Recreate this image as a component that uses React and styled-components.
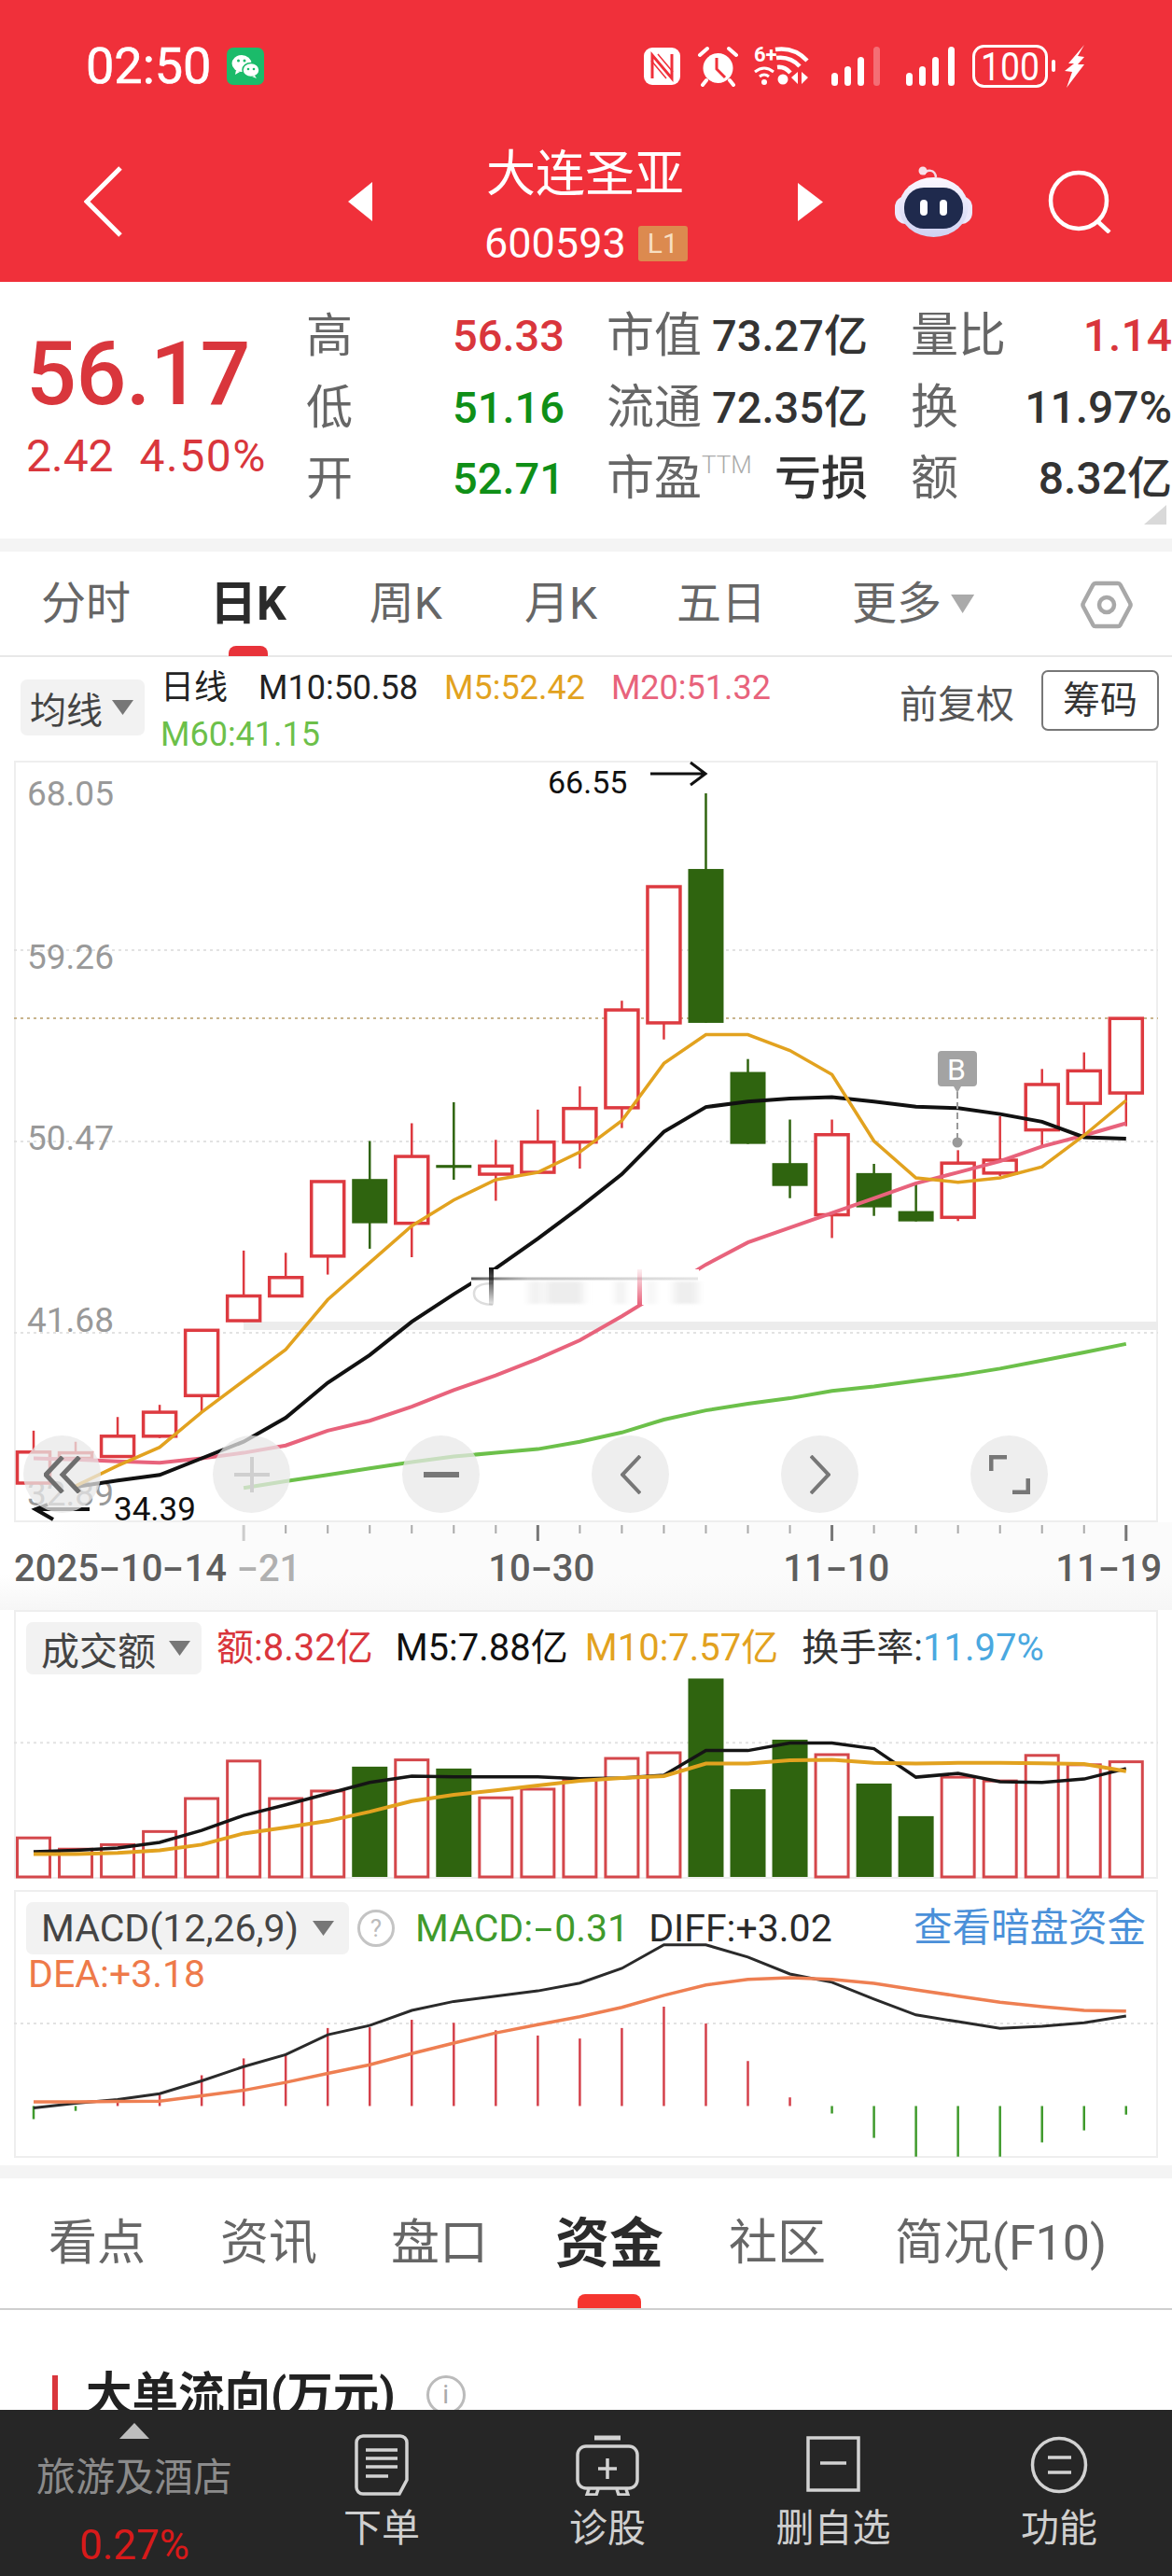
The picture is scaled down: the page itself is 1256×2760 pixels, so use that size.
import React from 'react';
import styled, { createGlobalStyle } from 'styled-components';

const FONT = `Roboto, "Noto Sans CJK SC", "Noto Sans", sans-serif`;
const RED = '#d9363c';
const GREEN = '#0f8f17';
const CANDLE_RED = '#dd3a40';
const CANDLE_GREEN = '#2f640f';
const ORANGE = '#e2a21f';
const PINK = '#e8637c';
const LIME = '#6cc04a';

const Global = createGlobalStyle`
  html, body { margin: 0; padding: 0; background: #fff; }
  body { font-family: ${FONT}; width: 1256px; height: 2760px; overflow: hidden; }
  * { box-sizing: border-box; }
`;

const Page = styled.div`
  width: 1256px; height: 2760px; overflow: hidden; display: flex; flex-direction: column; background: #fff; color: #333;
`;
const Header = styled.header`background: #f0303a; height: 302px; color: #fff; display: flex; flex-direction: column;`;
const StatusBar = styled.div`height: 130px; padding: 48px 94px 0 92px; display: flex; align-items: flex-start;`;
const Clock = styled.span`font-size: 54px; line-height: 46px; font-weight: 400; width: 134px; margin-right: 17px; white-space: nowrap; -webkit-text-stroke: 0.6px #fff;`;
const StatusIcon = styled.svg`display: block; flex: none; overflow: visible; margin-left: ${p => p.$gap || 0}px; margin-top: ${p => p.$top || 0}px;`;
const StatusRight = styled.div`margin-left: auto; display: flex; align-items: flex-start;`;
const Nav = styled.nav`height: 172px; padding-left: 90px; display: flex; align-items: center;`;
const NavIcon = styled.svg`display: block; flex: none; margin-left: ${p => p.$gap || 0}px;`;
const TitleBlock = styled.div`
  align-self: flex-start; margin: 27px 0 0 120px; width: 218px; flex: none; display: flex; flex-direction: column;
`;
const Title = styled.div`font-size: 53px; line-height: 60px; text-align: left; padding-left: 2px; white-space: nowrap;`;
const CodeRow = styled.div`margin-top: 24px; display: flex; align-items: center; gap: 13px; height: 40px;`;
const Code = styled.span`font-size: 45px; line-height: 40px;`;
const LevelTag = styled.span`
  width: 56px; height: 38px; background: #dc8a4f; color: #f7dfc2; border-radius: 3px; font-size: 30px; line-height: 38px; text-align: center;
`;

const Quote = styled.section`height: 275px; display: flex; position: relative; flex: none;`;
const PriceCol = styled.div`width: 328px; flex: none; padding: 49px 0 0 28px;`;
const Price = styled.div`font-size: 95px; line-height: 100px; font-weight: 500; color: ${RED}; letter-spacing: -0.5px;`;
const Change = styled.div`margin-top: 13px; display: flex; gap: 28px; font-size: 48px; line-height: 50px; color: ${RED};`;
const ChangeRate = styled.span`letter-spacing: 1.5px;`;
const StatCol = styled.div`
  width: ${p => p.$w}px; margin-left: ${p => p.$ml}px; flex: none; padding-top: 20px; display: flex; flex-direction: column;
`;
const StatRow = styled.div`height: 76.5px; display: flex; justify-content: space-between; align-items: center; white-space: nowrap;`;
const StatLabel = styled.span`font-size: ${p => p.$size || 51}px; line-height: 60px; color: #666; display: inline-flex; align-items: flex-start;`;
const Ttm = styled.sup`font-size: 26px; line-height: 30px; color: #aaa; font-weight: 300; vertical-align: baseline;`;
const StatValue = styled.span`
  font-size: ${p => p.$size || 47}px; line-height: 60px; font-weight: 500; color: ${p => p.$color || '#333'};
`;
const Corner = styled.div`
  position: absolute; right: 6px; bottom: 15px; width: 24px; height: 21px; background: #d9d9d9; clip-path: polygon(100% 0, 100% 100%, 0 100%);
`;
const Band = styled.div`height: 14px; flex: none; background: #f4f4f4;`;

const TabRow = styled.div`
  height: ${p => p.$h}px; flex: none; display: flex; align-items: flex-start; padding-top: ${p => p.$pt}px; border-bottom: 2px solid ${p => p.$line}; position: relative;
`;
const Tab = styled.div`
  position: relative; height: 60px; flex: none; margin-left: ${p => p.$ml}px; white-space: nowrap; font-size: ${p => p.$active ? p.$size + (p.$grow || 0) : p.$size}px; line-height: 60px; color: ${p => p.$active ? '#2b2b2b' : '#666'}; font-weight: ${p => p.$active ? 700 : 400};
`;
const TabMark = styled.i`
  position: absolute; left: 50%; transform: translateX(-50%); bottom: ${p => p.$bottom}px; width: ${p => p.$w}px; height: ${p => p.$h}px; border-radius: 8px 8px 0 0; background: ${p => p.$color};
`;
const TabArrow = styled.i`
  flex: none; margin: 20px 0 0 10px; width: 25px; height: 20px; background: #aaa; clip-path: polygon(0 0, 100% 0, 50% 100%);
`;
const GearSlot = styled.div`margin: 5px 0 0 auto; padding-right: 42px;`;
const GearIcon = styled.svg`display: block;`;

const IndicatorRow = styled.div`height: 111px; flex: none; padding: 0 14px 0 22px; display: flex; align-items: flex-start;`;
const ChipSlot = styled.div`margin-top: 24px; flex: none;`;
const Chip = styled.div`
  width: ${p => p.$w}px; height: ${p => p.$h}px; flex: none; background: #f2f2f2; border-radius: 7px; display: flex; align-items: center; justify-content: space-between; padding: 0 ${p => p.$pr || 12}px 0 ${p => p.$pl}px; font-size: ${p => p.$size}px; color: #444; white-space: nowrap;
`;
const ChipArrow = styled.i`
  width: 23px; height: 16px; flex: none; background: #777; clip-path: polygon(0 0, 100% 0, 50% 100%);
`;
const Legend = styled.div`margin: 8px 0 0 17px; display: flex; flex-wrap: wrap; column-gap: 28px; width: 700px;`;
const LegendLine = styled.span`font-size: 36px; line-height: 50px; margin-right: ${p => p.$mr || 0}px; color: ${p => p.$color || '#222'}; white-space: nowrap;`;
const RightTools = styled.div`margin-left: auto; display: flex; align-items: flex-start;`;
const Adjust = styled.span`margin-top: 26px; font-size: 41px; line-height: 50px; color: #555; white-space: nowrap;`;
const ChipButton = styled.button`
  margin: 14px 0 0 29px; width: 126px; height: 65px; border: 2px solid #777; border-radius: 7px; background: #fff; font: 400 40px/60px ${FONT}; color: #333; padding: 0;
`;

const Panel = styled.div`
  margin: 0 15px; width: 1226px; flex: none; height: ${p => p.$h}px; border: 2px solid #eee; position: relative;
`;
const ChartSvg = styled.svg`position: absolute; left: -2px; top: -2px; display: block;`;
const AxisText = styled.text`font-family: ${FONT}; font-size: 37px; fill: #999;`;
const MarkText = styled.text`font-family: ${FONT}; font-size: ${p => p.$size || 34}px; fill: #111;`;
const BText = styled.text`font-family: ${FONT}; font-size: 32px; fill: #fff;`;

const ControlRow = styled.div`position: absolute; left: 8px; top: 721px; display: flex; gap: 120px;`;
const RoundButton = styled.div`
  width: 83px; height: 83px; border-radius: 50%; background: rgba(232,232,232,.74); display: flex; align-items: center; justify-content: center;
`;

const AxisSection = styled.div`
  height: 94px; flex: none; background: linear-gradient(#ffffff00 60%, #f6f6f6 100%), linear-gradient(90deg, #fff 40px, #fbfbfb 110px);
`;
const DateRow = styled.div`margin-top: 6px; padding-left: 15px; display: flex; font-size: 40px; line-height: 40px; font-weight: 500; white-space: nowrap;`;
const DateText = styled.span`margin-left: ${p => p.$ml || 0}px; color: ${p => p.$faint ? '#b0b0b0' : '#5e5e5e'};`;
const Dash = styled.span`display: inline-block; width: 23px; text-align: center; transform: scaleX(1.7);`;
const Ticks = styled.svg`display: block;`;

const PanelLegend = styled.div`position: absolute; left: 11px; top: 11px; right: 11px;`;
const LegendRow = styled.div`display: flex; align-items: center; white-space: nowrap; height: 56px;`;
const Metric = styled.span`
  margin-left: ${p => p.$ml}px; font-size: ${p => p.$size || 40}px; line-height: 56px; color: ${p => p.$color};
`;
const MetricBlue = styled.span`color: #4aa8e0;`;
const Tail = styled.span`margin-left: auto; font-size: 41.5px; line-height: 56px; color: #4a90d9;`;
const Help = styled.span`
  margin-left: 9px; width: 40px; height: 40px; border-radius: 50%; border: 3px solid #c4c4c4; color: #bbb; font-size: 26px; line-height: 34px; text-align: center;
`;
const DeaLine = styled.div`margin: -6px 0 0 2px; font-size: 41px; line-height: 54px; color: #ee7a4a;`;
const Gap = styled.div`height: ${p => p.$h}px; flex: none;`;

const Heading = styled.section`height: 107px; flex: none; overflow: hidden; padding: 70px 0 0 56px; display: flex; align-items: flex-start;`;
const HeadingBar = styled.i`width: 6px; height: 38px; background: #d9363c; flex: none;`;
const HeadingText = styled.h2`margin: -9px 0 0 30px; font-size: 49.5px; line-height: 60px; font-weight: 700; color: #222; white-space: nowrap;`;
const InfoDot = styled.span`
  margin: 0 0 0 33px; width: 42px; height: 42px; border-radius: 50%; border: 3px solid #bbb; color: #aaa; font-size: 28px; line-height: 36px; text-align: center; flex: none;
`;

const BottomBar = styled.footer`
  height: 179px; flex: none; background: #262626; display: grid; grid-template-columns: 288px repeat(4, 242px); align-items: start;
`;
const SectorCell = styled.div`display: flex; flex-direction: column; align-items: center; padding-top: 14px;`;
const UpMark = styled.i`width: 32px; height: 17px; background: #bdbdbd; clip-path: polygon(50% 0, 100% 100%, 0 100%);`;
const SectorName = styled.span`margin-top: 17px; font-size: 42px; line-height: 50px; color: #8b8b8b; white-space: nowrap;`;
const SectorRate = styled.span`margin-top: 22px; font-size: 44px; line-height: 50px; color: #d81a1a;`;
const ActionCell = styled.div`display: flex; flex-direction: column; align-items: center; padding-top: 26px;`;
const ActionIcon = styled.svg`display: block;`;
const ActionLabel = styled.span`margin-top: 10px; font-size: 41px; line-height: 50px; color: #cfcfcf; white-space: nowrap;`;

/* ---- chart data, read off the reference ---- */
const y3 = v => 1090 + v / 2.529;
const y4 = v => 1700 + v / 2.489;
const X = i => 36 + 45.03 * i;
const line = (arr, f, start = 0) => arr.map((v, i) => `${X(i + start).toFixed(1)},${f(v).toFixed(1)}`).join(' ');

const CANDLES = [
  ['r', 1120, 1262, 1178, 1262], ['r', 1150, 1195, 1180, 1195], ['r', 1083, 1190, 1135, 1190], ['r', 1050, 1140, 1070, 1135],
  ['r', 848, 1070, 848, 1025], ['r', 632, 825, 755, 822], ['r', 638, 757, 705, 755], ['r', 445, 697, 445, 647],
  ['g', 335, 627, 438, 558], ['r', 287, 650, 377, 558], ['g', 230, 440, 400, 408], ['r', 332, 497, 403, 425],
  ['r', 250, 420, 338, 420], ['r', 187, 410, 247, 338], ['r', -45, 300, -20, 245], ['r', -354, 60, -354, 15],
  ['g', -607, 15, -402, 15], ['g', 113, 343, 148, 343], ['g', 277, 490, 395, 457], ['r', 277, 598, 318, 535],
  ['g', 397, 538, 422, 515], ['g', 450, 553, 525, 553], ['r', 360, 552, 395, 542], ['r', 268, 430, 387, 422],
  ['r', 140, 350, 182, 305], ['r', 95, 320, 145, 233], ['r', 3, 295, 3, 205],
];
const M5 = [1270, 1215, 1165, 1070, 985, 900, 765, 665, 565, 495, 440, 420, 365, 280, 125, 47, 47, 90, 155, 335, 435, 447, 435, 405, 320, 225];
const M10 = [1272, 1255, 1240, 1195, 1150, 1085, 990, 915, 825, 750, 680, 600, 515, 425, 310, 243, 228, 220, 216, 228, 242, 246, 262, 283, 325, 329];
const M20 = [1195, 1198, 1203, 1207, 1195, 1180, 1160, 1120, 1093, 1055, 1010, 970, 925, 875, 810, 740, 670, 610, 570, 530, 490, 450, 420, 390, 350, 320, 287];
const M60 = [1275, 1257, 1240, 1222, 1205, 1190, 1180, 1170, 1150, 1125, 1090, 1065, 1047, 1032, 1012, 1000, 985, 970, 952, 930, 908, 885];

const BARS = [[670, 'r'], [700, 'r'], [688, 'r'], [653, 'r'], [565, 'r'], [465, 'r'], [565, 'r'], [545, 'r'], [480, 'g'], [462, 'r'], [485, 'g'], [563, 'r'], [540, 'r'], [515, 'r'], [458, 'r'], [443, 'r'], [245, 'g'], [540, 'g'], [408, 'g'], [448, 'r'], [525, 'g'], [612, 'g'], [508, 'r'], [518, 'r'], [450, 'r'], [475, 'r'], [467, 'r']];
const VOL_M5 = [707, 703, 697, 682, 650, 610, 582, 552, 522, 505, 507, 507, 507, 512, 510, 503, 437, 437, 417, 417, 432, 508, 498, 520, 522, 513, 485];
const VOL_M10 = [713, 713, 710, 703, 688, 658, 642, 625, 600, 572, 555, 543, 530, 518, 510, 505, 472, 472, 463, 462, 470, 472, 470, 470, 471, 473, 492];
const HIST = [1420, 1398, 1370, 1355, 1303, 1258, 1245, 1177, 1175, 1155, 1163, 1183, 1197, 1205, 1177, 1120, 1165, 1265, 1362, 1405, 1470, 1520, 1520, 1520, 1482, 1450, 1408];
const DIFF = [1390, 1378, 1368, 1352, 1318, 1280, 1248, 1195, 1170, 1130, 1106, 1092, 1078, 1057, 1018, 955, 955, 988, 1033, 1055, 1100, 1142, 1160, 1178, 1172, 1163, 1145];
const DEA = [1374, 1374, 1373, 1372, 1358, 1343, 1322, 1298, 1275, 1245, 1217, 1190, 1168, 1147, 1122, 1090, 1062, 1047, 1043, 1047, 1058, 1075, 1092, 1108, 1120, 1130, 1132];

const dotted = (y, c = '#e2e2e2') => <line x1="15" x2="1241" y1={y} y2={y} stroke={c} strokeWidth="2" strokeDasharray="3 4" />;

/* the hyphen in these labels is drawn about twice as wide as the font's */
const Dashed = ({ text }) => text.split('-').map((part, i) => (
  <React.Fragment key={i}>{i > 0 && <Dash>-</Dash>}{part}</React.Fragment>
));

const MainChart = () => (
  <ChartSvg width="1226" height="816" viewBox="15 815 1226 816">
    <defs>
      <filter id="smear" x="-10%" y="-50%" width="120%" height="200%"><feGaussianBlur stdDeviation="4 1.5" /></filter>
      <linearGradient id="fadeDown" x1="0" y1="0" x2="0" y2="1"><stop offset="0" stopColor="#111" /><stop offset="1" stopColor="#111" stopOpacity=".1" /></linearGradient>
      <linearGradient id="fadeUp" x1="0" y1="1" x2="0" y2="0"><stop offset="0" stopColor={PINK} /><stop offset="1" stopColor={PINK} stopOpacity=".1" /></linearGradient>
      <linearGradient id="fadeRight" x1="0" y1="0" x2="1" y2="0"><stop offset="0" stopColor="#222" /><stop offset=".25" stopColor="#aaa" /><stop offset="1" stopColor="#ddd" /></linearGradient>
    </defs>
    {dotted(1018)}{dotted(1091, '#c9b48d')}{dotted(1223)}{dotted(1428)}
    <AxisText x="29" y="863">68.05</AxisText>
    <AxisText x="29" y="1038">59.26</AxisText>
    <AxisText x="29" y="1232">50.47</AxisText>
    <AxisText x="29" y="1427">41.68</AxisText>
    <AxisText x="29" y="1613">32.89</AxisText>
    <rect x="261" y="1416" width="980" height="9" fill="#ececec" />
    {CANDLES.map(([c, hi, lo, top, bot], i) => {
      const col = c === 'r' ? CANDLE_RED : CANDLE_GREEN;
      const x = X(i);
      return (
        <g key={i}>
          <line x1={x} x2={x} y1={y3(hi)} y2={y3(lo)} stroke={col} strokeWidth="2.5" />
          {c === 'g'
            ? <rect x={x - 19} y={y3(top)} width="38" height={Math.max(y3(bot) - y3(top), 3)} fill={col} />
            : <rect x={x - 17.5} y={y3(top)} width="35" height={y3(bot) - y3(top)} fill="#fff" stroke={col} strokeWidth="3.5" />}
        </g>
      );
    })}
    <polyline points={line(M60, y3, 5)} fill="none" stroke={LIME} strokeWidth="4" />
    <polyline points={line(M20, y3)} fill="none" stroke={PINK} strokeWidth="4" />
    <polyline points={line(M10, y3, 1)} fill="none" stroke="#111" strokeWidth="4" />
    <polyline points={line(M5, y3, 1)} fill="none" stroke={ORANGE} strokeWidth="3.5" />
    {/* smeared capture artefact over the middle of the chart */}
    <rect x="505" y="1360" width="244" height="38" fill="#fff" />
    <g filter="url(#smear)">
      <rect x="567" y="1373" width="13" height="24" fill="#f0f0f0" />
      <rect x="585" y="1373" width="40" height="24" fill="#ededed" />
      <rect x="660" y="1373" width="10" height="24" fill="#f0f0f0" />
      <rect x="695" y="1373" width="6" height="24" fill="#f0f0f0" />
      <rect x="722" y="1373" width="26" height="24" fill="#eee" />
    </g>
    <path d="M528 1375q-20 0-20 11t20 12" fill="none" stroke="#ddd" strokeWidth="2.500" />
    <rect x="505" y="1368.500" width="243" height="3" fill="url(#fadeRight)" opacity=".75" />
    <rect x="524" y="1358" width="5" height="40" fill="url(#fadeDown)" />
    <rect x="683" y="1360" width="5" height="38" fill="url(#fadeUp)" />
    {/* high / low marks */}
    <MarkText x="587" y="850">66.55</MarkText>
    <path d="M697 829h58M740 817l16 12-16 12" fill="none" stroke="#111" strokeWidth="3" />
    <MarkText x="122" y="1629" $size={35}>34.39</MarkText>
    <path d="M96 1617H38M57 1628l-19-11 13-5" fill="none" stroke="#111" strokeWidth="4" />
    {/* B marker */}
    <line x1="1026" x2="1026" y1="1170" y2="1224" stroke="#999" strokeWidth="2" strokeDasharray="7 4" />
    <circle cx="1026" cy="1224" r="5.500" fill="#999" />
    <path d="M1009 1126h34a4 4 0 0 1 4 4v30a4 4 0 0 1-4 4h-13l-4 7-4-7h-13a4 4 0 0 1-4-4v-30a4 4 0 0 1 4-4z" fill="#a3a3a3" />
    <BText x="1015" y="1157">B</BText>
  </ChartSvg>
);

const VolumeChart = () => (
  <ChartSvg width="1226" height="290" viewBox="15 1725 1226 290">
    {dotted(y4(416))}
    {BARS.map(([t, c], i) => (c === 'g'
      ? <rect key={i} x={X(i) - 19} y={y4(t)} width="38" height={2011 - y4(t)} fill={CANDLE_GREEN} />
      : <rect key={i} x={X(i) - 17.5} y={y4(t)} width="35" height={2011 - y4(t)} fill="#fff" stroke="#d4474b" strokeWidth="3" />))}
    <polyline points={line(VOL_M5, y4)} fill="none" stroke="#151515" strokeWidth="3.5" />
    <polyline points={line(VOL_M10, y4)} fill="none" stroke={ORANGE} strokeWidth="4" />
  </ChartSvg>
);

const MacdChart = () => (
  <ChartSvg width="1226" height="290" viewBox="15 2025 1226 290">
    {dotted(y4(1165))}
    {HIST.map((t, i) => (
      <line key={i} x1={X(i)} x2={X(i)} y1={y4(1385)} y2={y4(t)} stroke={t > 1385 ? '#3f9a2c' : '#d4404a'} strokeWidth="2.5" />
    ))}
    <polyline points={line(DIFF, y4)} fill="none" stroke="#2a2a2a" strokeWidth="3" />
    <polyline points={line(DEA, y4)} fill="none" stroke="#ee7f52" strokeWidth="3.5" />
  </ChartSvg>
);

const WeChat = () => (
  <StatusIcon width="40" height="40" viewBox="0 0 40 40" $top="3">
    <rect width="40" height="40" rx="7" fill="#1bbb6a" />
    <ellipse cx="16" cy="17" rx="10.500" ry="9" fill="#fff" />
    <path d="M10 24l-1 5 5-3z" fill="#fff" />
    <ellipse cx="26" cy="24" rx="9" ry="7.500" fill="#fff" stroke="#1bbb6a" strokeWidth="1.500" />
    <path d="M30 30l2 3-5-2z" fill="#fff" />
    <circle cx="12.500" cy="14" r="1.500" fill="#1bbb6a" /><circle cx="19" cy="14" r="1.500" fill="#1bbb6a" />
    <circle cx="23" cy="23" r="1.300" fill="#1bbb6a" /><circle cx="29" cy="23" r="1.300" fill="#1bbb6a" />
  </StatusIcon>
);

const Signal = ({ last, gap }) => (
  <StatusIcon width="52" height="42" viewBox="0 0 52 42" $gap={gap} $top="2">
    <rect x="0" y="28" width="7" height="14" rx="3.500" fill="#fff" />
    <rect x="14" y="21" width="7" height="21" rx="3.500" fill="#fff" />
    <rect x="28" y="11" width="7" height="31" rx="3.500" fill="#fff" />
    <rect x="45" y="0" width="7" height="42" rx="3.500" fill={last} />
  </StatusIcon>
);

const StatusIcons = () => (
  <StatusRight>
    <StatusIcon width="39" height="40" viewBox="0 0 39 40" $top="3">
      <rect width="39" height="40" rx="9" fill="#fff" />
      <path d="M9 33V8l21 25V7" fill="none" stroke="#f0303a" strokeWidth="3" />
      <path d="M15 7l16 19M8 14l16 19" fill="none" stroke="#f0303a" strokeWidth="1.500" />
    </StatusIcon>
    <StatusIcon width="43" height="42" viewBox="0 0 43 42" $gap="19" $top="2">
      <circle cx="21.500" cy="23" r="16" fill="#fff" />
      <path d="M20 12v12l9 9" fill="none" stroke="#f0303a" strokeWidth="3" />
      <path d="M2 9l8-7M41 9l-8-7" stroke="#fff" strokeWidth="4" strokeLinecap="round" />
      <path d="M9 36l-4 5M34 36l4 5" stroke="#fff" strokeWidth="4" strokeLinecap="round" />
    </StatusIcon>
    <StatusIcon width="58" height="44" viewBox="0 0 58 44" $gap="17">
      <text x="0" y="18" fontFamily="Roboto" fontSize="22" fontWeight="700" fill="#fff">6+</text>
      <path d="M23 5q20-3 34 12M24 14q15-2 25 9M25 24q8-1 14 6" fill="none" stroke="#fff" strokeWidth="4.500" />
      <circle cx="31" cy="37" r="5.500" fill="#fff" />
      <path d="M1 29q10-8 20 0M6 34q5-4 10 0" fill="none" stroke="#fff" strokeWidth="3" />
      <circle cx="11" cy="40" r="3" fill="#fff" />
      <path d="M47 29v13l-7-7zM51 29v13l7-7z" fill="#fff" />
    </StatusIcon>
    <Signal last="rgba(255,255,255,.3)" gap={25} />
    <Signal last="#fff" gap={28} />
    <StatusIcon width="90" height="46" viewBox="0 0 90 46" $gap="19">
      <rect x="1.500" y="1.500" width="78" height="43" rx="11" fill="none" stroke="#fff" strokeWidth="3" />
      <rect x="85" y="16" width="4" height="13" rx="2" fill="#fff" />
      <text x="9" y="38" fontFamily="Roboto" fontSize="42" textLength="63" lengthAdjust="spacingAndGlyphs" fill="#fff">100</text>
    </StatusIcon>
    <StatusIcon width="21" height="46" viewBox="0 0 21 46" $gap="9">
      <path d="M21 0L4 20h6L0 28l8 1-6 17 19-25h-7l7-8-7-1z" fill="#fff" />
    </StatusIcon>
  </StatusRight>
);

const Robot = () => (
  <NavIcon width="83" height="76" viewBox="0 0 83 76" $gap="77">
    <defs>
      <linearGradient id="robotShell" x1="0" y1="0" x2="0" y2="1">
        <stop offset="0" stopColor="#fbf7ff" /><stop offset="1" stopColor="#cfd2f2" />
      </linearGradient>
    </defs>
    <path d="M31 9c3-6 12-6 13 3" fill="none" stroke="#f3dbe6" strokeWidth="2.500" />
    <circle cx="30" cy="5" r="4.500" fill="#f8dfe9" />
    <rect x="0" y="32" width="83" height="30" rx="12" fill="#ece8fb" />
    <ellipse cx="41.500" cy="44" rx="37" ry="32" fill="url(#robotShell)" />
    <rect x="10" y="23" width="63" height="44" rx="21" fill="#1f2a4d" />
    <rect x="27" y="36" width="8" height="17" rx="4" fill="#fff" />
    <rect x="48" y="36" width="8" height="17" rx="4" fill="#fff" />
  </NavIcon>
);

const NavBar = () => (
  <Nav>
    <NavIcon width="41" height="76" viewBox="0 0 41 76">
      <path d="M39 2L3 38l36 36" fill="none" stroke="#fff" strokeWidth="5" />
    </NavIcon>
    <NavIcon width="26" height="42" viewBox="0 0 26 42" $gap="242"><path d="M26 0v42L0 21z" fill="#fff" /></NavIcon>
    <TitleBlock>
      <Title>大连圣亚</Title>
      <CodeRow><Code>600593</Code><LevelTag>L1</LevelTag></CodeRow>
    </TitleBlock>
    <NavIcon width="27" height="41" viewBox="0 0 27 41" $gap="118"><path d="M0 0v41l27-20.500z" fill="#fff" /></NavIcon>
    <Robot />
    <NavIcon width="68" height="68" viewBox="0 0 68 68" $gap="81">
      <circle cx="33" cy="33" r="30" fill="none" stroke="#fff" strokeWidth="4.500" />
      <path d="M52 54l14 13" stroke="#fff" strokeWidth="4.500" />
    </NavIcon>
  </Nav>
);

const QuoteBlock = () => (
  <Quote>
    <PriceCol>
      <Price>56.17</Price>
      <Change><span>2.42</span><ChangeRate>4.50%</ChangeRate></Change>
    </PriceCol>
    <StatCol $w={277} $ml={0}>
      <StatRow><StatLabel $size={50}>高</StatLabel><StatValue $color={RED}>56.33</StatValue></StatRow>
      <StatRow><StatLabel $size={50}>低</StatLabel><StatValue $color={GREEN}>51.16</StatValue></StatRow>
      <StatRow><StatLabel $size={50}>开</StatLabel><StatValue $color={GREEN}>52.71</StatValue></StatRow>
    </StatCol>
    <StatCol $w={280} $ml={45}>
      <StatRow><StatLabel>市值</StatLabel><StatValue>73.27亿</StatValue></StatRow>
      <StatRow><StatLabel>流通</StatLabel><StatValue>72.35亿</StatValue></StatRow>
      <StatRow><StatLabel>市盈<Ttm>TTM</Ttm></StatLabel><StatValue $size={50}>亏损</StatValue></StatRow>
    </StatCol>
    <StatCol $w={280} $ml={46}>
      <StatRow><StatLabel>量比</StatLabel><StatValue $color={RED} $size={48}>1.14</StatValue></StatRow>
      <StatRow><StatLabel>换</StatLabel><StatValue $size={48}>11.97%</StatValue></StatRow>
      <StatRow><StatLabel>额</StatLabel><StatValue $size={48}>8.32亿</StatValue></StatRow>
    </StatCol>
    <Corner />
  </Quote>
);

const PeriodTabs = () => (
  <TabRow $h={113} $pt={26} $line="#e8e8e8">
    <Tab $size={48} $ml={44}>分时</Tab>
    <Tab $size={48} $grow={2} $ml={85} $active>日K<TabMark $bottom={-26} $w={42} $h={11} $color="#e8333a" /></Tab>
    <Tab $size={48} $ml={89}>周K</Tab>
    <Tab $size={48} $ml={88}>月K</Tab>
    <Tab $size={48} $ml={85}>五日</Tab>
    <Tab $size={48} $ml={92}>更多</Tab>
    <TabArrow />
    <GearSlot>
      <GearIcon width="56" height="52" viewBox="0 0 56 52">
        <path d="M16 3h24a3 3 0 0 1 2.600 1.500L53 24a4 4 0 0 1 0 4L42.600 47.500A3 3 0 0 1 40 49H16a3 3 0 0 1-2.600-1.500L3 28a4 4 0 0 1 0-4L13.400 4.500A3 3 0 0 1 16 3z" fill="none" stroke="#a8a8a8" strokeWidth="4.500" />
        <circle cx="28" cy="26" r="8" fill="none" stroke="#a8a8a8" strokeWidth="4.500" />
      </GearIcon>
    </GearSlot>
  </TabRow>
);

const Indicators = () => (
  <IndicatorRow>
    <ChipSlot>
      <Chip $w={133} $h={60} $pl={10} $size={39}>均线<ChipArrow /></Chip>
    </ChipSlot>
    <Legend>
      <LegendLine $mr={5}>日线</LegendLine>
      <LegendLine>M10:50.58</LegendLine>
      <LegendLine $color={ORANGE}>M5:52.42</LegendLine>
      <LegendLine $color={PINK}>M20:51.32</LegendLine>
      <LegendLine $color={LIME}>M60:41.15</LegendLine>
    </Legend>
    <RightTools>
      <Adjust>前复权</Adjust>
      <ChipButton>筹码</ChipButton>
    </RightTools>
  </IndicatorRow>
);

const stroke = { fill: 'none', stroke: '#777', strokeWidth: 4 };
const Controls = () => (
  <ControlRow>
    <RoundButton><svg width="40" height="40" viewBox="0 0 40 40"><path d="M20 1L2 20l18 19M38 1L20 20l18 19" {...stroke} stroke="#6e6e6e" strokeWidth="5" /></svg></RoundButton>
    <RoundButton><svg width="38" height="38" viewBox="0 0 38 38"><path d="M0 19h38M19 0v38" {...stroke} stroke="#cfcfcf" /></svg></RoundButton>
    <RoundButton><svg width="38" height="6" viewBox="0 0 38 6"><rect width="38" height="6" fill="#777" /></svg></RoundButton>
    <RoundButton><svg width="22" height="42" viewBox="0 0 22 42"><path d="M21 1L2 21l19 20" {...stroke} /></svg></RoundButton>
    <RoundButton><svg width="22" height="42" viewBox="0 0 22 42"><path d="M1 1l19 20L1 41" {...stroke} /></svg></RoundButton>
    <RoundButton><svg width="44" height="42" viewBox="0 0 44 42"><path d="M2 17V2h17M42 25v15H25" {...stroke} strokeWidth="5" /></svg></RoundButton>
  </ControlRow>
);

const Axis = () => (
  <AxisSection>
    <Ticks width="1256" height="24" viewBox="0 1631 1256 24">
      {CANDLES.map((_, i) => {
        if (i < 5) return null;
        const major = (i - 5) % 7 === 0;
        return <line key={i} x1={X(i)} x2={X(i)} y1="1634" y2={major ? 1651 : 1643} stroke={i === 5 ? '#ccc' : major ? '#777' : '#aaa'} strokeWidth={major ? 3 : 2} />;
      })}
    </Ticks>
    <DateRow>
      <DateText><Dashed text="2025-10-14" /></DateText>
      <DateText $faint $ml={11}><Dashed text="-21" /></DateText>
      <DateText $ml={201}><Dashed text="10-30" /></DateText>
      <DateText $ml={202}><Dashed text="11-10" /></DateText>
      <DateText $ml={178}><Dashed text="11-19" /></DateText>
    </DateRow>
  </AxisSection>
);

const NEWS = [['看点', 52], ['资讯', 80], ['盘口', 79], ['资金', 72, true], ['社区', 70], ['简况(F10)', 74]];

const InfoTabs = () => (
  <TabRow $h={141} $pt={40} $line="#cfcfcf">
    {NEWS.map(([t, ml, on]) => (
      <Tab key={t} $size={52} $grow={6} $ml={ml} $active={on}>
        {t}
        {on && <TabMark $bottom={-39} $w={68} $h={15} $color="#f5352f" />}
      </Tab>
    ))}
  </TabRow>
);

const iconStroke = { fill: 'none', stroke: '#d2d2d2', strokeWidth: 3.5 };
const Footer = () => (
  <BottomBar>
    <SectorCell>
      <UpMark />
      <SectorName>旅游及酒店</SectorName>
      <SectorRate>0.27%</SectorRate>
    </SectorCell>
    <ActionCell>
      <ActionIcon width="58" height="66" viewBox="0 0 58 66">
        <path d="M9 2h40a7 7 0 0 1 7 7v40l-8 15H9a7 7 0 0 1-7-7V9a7 7 0 0 1 7-7z" {...iconStroke} />
        <path d="M12 17h34M12 26h34M12 35h34M12 45h24" {...iconStroke} />
      </ActionIcon>
      <ActionLabel>下单</ActionLabel>
    </ActionCell>
    <ActionCell>
      <ActionIcon width="68" height="66" viewBox="0 0 68 66">
        <path d="M20 4h28" {...iconStroke} strokeWidth="5" />
        <rect x="2" y="13" width="64" height="45" rx="9" {...iconStroke} />
        <path d="M34 26v22M24 37h20M14 59l-2 6h10l2-6M54 59l2 6H46l-2-6" {...iconStroke} />
      </ActionIcon>
      <ActionLabel>诊股</ActionLabel>
    </ActionCell>
    <ActionCell>
      <ActionIcon width="58" height="66" viewBox="0 0 58 66">
        <rect x="2" y="4" width="54" height="56" {...iconStroke} />
        <path d="M15 31h28" {...iconStroke} />
      </ActionIcon>
      <ActionLabel>删自选</ActionLabel>
    </ActionCell>
    <ActionCell>
      <ActionIcon width="62" height="66" viewBox="0 0 62 66">
        <circle cx="31" cy="33" r="28.500" {...iconStroke} />
        <path d="M19 25h25M19 41h25" {...iconStroke} />
      </ActionIcon>
      <ActionLabel>功能</ActionLabel>
    </ActionCell>
  </BottomBar>
);

export default function App() {
  return (
    <Page>
      <Global />
      <Header>
        <StatusBar>
          <Clock>02:50</Clock>
          <WeChat />
          <StatusIcons />
        </StatusBar>
        <NavBar />
      </Header>
      <QuoteBlock />
      <Band />
      <PeriodTabs />
      <Indicators />
      <Panel $h={816}>
        <MainChart />
        <Controls />
      </Panel>
      <Axis />
      <Panel $h={288}>
        <VolumeChart />
        <PanelLegend>
          <LegendRow>
            <Chip $w={188} $h={56} $pl={16} $size={41}>成交额<ChipArrow /></Chip>
            <Metric $ml={16} $color="#d9363c">额:8.32亿</Metric>
            <Metric $ml={24} $color="#111">M5:7.88亿</Metric>
            <Metric $ml={18} $color={ORANGE}>M10:7.57亿</Metric>
            <Metric $ml={25} $color="#333">换手率:<MetricBlue>11.97%</MetricBlue></Metric>
          </LegendRow>
        </PanelLegend>
      </Panel>
      <Gap $h={12} />
      <Panel $h={287}>
        <MacdChart />
        <PanelLegend>
          <LegendRow>
            <Chip $w={346} $h={56} $pl={16} $pr={16} $size={41}>MACD(12,26,9)<ChipArrow /></Chip>
            <Help>?</Help>
            <Metric $ml={22} $size={41} $color="#3f9a2c"><Dashed text="MACD:-0.31" /></Metric>
            <Metric $ml={21} $size={41} $color="#2a2a2a">DIFF:+3.02</Metric>
            <Tail>查看暗盘资金</Tail>
          </LegendRow>
          <DeaLine>DEA:+3.18</DeaLine>
        </PanelLegend>
      </Panel>
      <Gap $h={8} />
      <Band />
      <InfoTabs />
      <Heading>
        <HeadingBar />
        <HeadingText>大单流向(万元)</HeadingText>
        <InfoDot>i</InfoDot>
      </Heading>
      <Footer />
    </Page>
  );
}
